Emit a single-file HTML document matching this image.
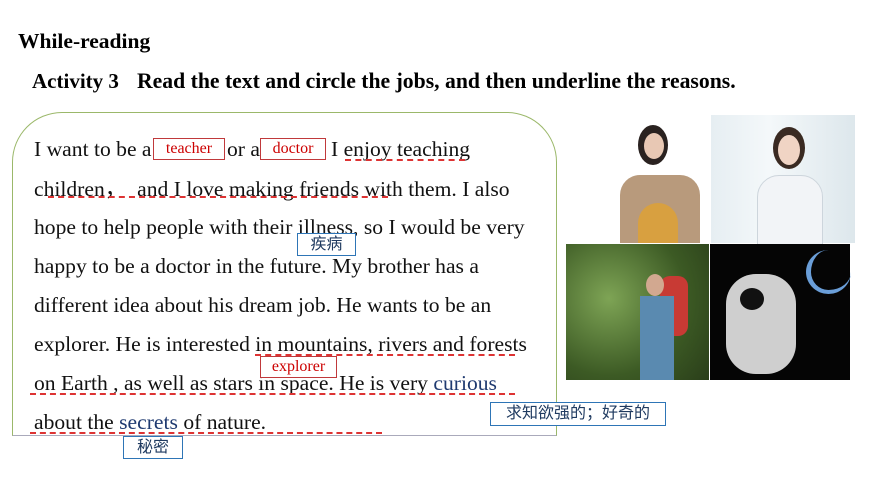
<!DOCTYPE html>
<html><head><meta charset="utf-8"><style>
body{margin:0;width:870px;height:489px;background:#fff;position:relative;overflow:hidden;font-family:"Liberation Serif",serif;}
.a{position:absolute;white-space:nowrap;}
.t{font-size:21.6px;color:#111;line-height:24px;left:34px;}
.u{position:absolute;border-bottom:2px dashed #d33;height:0;}
.rb{position:absolute;border:1px solid #c0393b;color:#c00;font-size:16px;text-align:center;line-height:20px;box-sizing:border-box;}
.bb{position:absolute;border:1px solid #2e75b6;color:#1f3a60;font-family:"Liberation Sans","Noto Sans CJK SC",sans-serif;font-size:16px;text-align:center;line-height:21px;box-sizing:border-box;background:#fff;}
</style></head><body>
<div class="a" style="left:18px;top:29px;font-size:21.5px;font-weight:bold;">While-reading</div>
<div class="a" style="left:32px;top:69px;font-size:21px;font-weight:bold;">Activity 3</div>
<div class="a" style="left:137px;top:69px;font-size:21.7px;font-weight:bold;">Read the text and circle the jobs, and then underline the reasons.</div>

<div class="a" style="left:12px;top:112px;width:545px;height:324px;border:1.3px solid #9bb86a;border-bottom-color:#aab;border-radius:50px 50px 0 0;box-sizing:border-box;"></div>

<div class="a t" style="top:137px;">I want to be a</div>
<div class="a t" style="top:137px;left:227px;">or a</div>
<div class="a t" style="top:137px;left:331px;">I enjoy teaching</div>
<div class="a t" style="top:176px;">children<span style="font-family:'Noto Sans CJK SC';">，</span>&nbsp; and I love making friends with them. I also</div>
<div class="a t" style="top:215px;">hope to help people with their illness, so I would be very</div>
<div class="a t" style="top:254px;">happy to be a doctor in the future. My brother has a</div>
<div class="a t" style="top:293px;">different idea about his dream job. He wants to be an</div>
<div class="a t" style="top:332px;">explorer. He is interested in mountains, rivers and forests</div>
<div class="a t" style="top:371px;">on Earth , as well as stars in space. He is very <span style="color:#1f3a70">curious</span></div>
<div class="a t" style="top:410px;">about the <span style="color:#1f3a70">secrets</span> of nature.</div>

<div class="u" style="left:345px;top:159px;width:120px;"></div>
<div class="u" style="left:48px;top:196px;width:340px;"></div>
<div class="u" style="left:255px;top:354px;width:260px;"></div>
<div class="u" style="left:30px;top:393px;width:485px;"></div>
<div class="u" style="left:30px;top:432px;width:352px;"></div>

<div class="rb" style="left:153px;top:138px;width:72px;height:22px;background:#fff;">teacher</div>
<div class="rb" style="left:260px;top:138px;width:66px;height:22px;background:#fff;">doctor</div>
<div class="rb" style="left:260px;top:356px;width:77px;height:22px;background:#fff;">explorer</div>
<div class="bb" style="left:297px;top:233px;width:59px;height:23px;">疾病</div>
<div class="bb" style="left:490px;top:402px;width:176px;height:24px;">求知欲强的；好奇的</div>
<div class="bb" style="left:123px;top:436px;width:60px;height:23px;">秘密</div>

<div class="a" style="left:598px;top:115px;width:112px;height:128px;background:#fff;">
  <div class="a" style="left:40px;top:10px;width:30px;height:40px;border-radius:50%;background:#2a2220;"></div>
  <div class="a" style="left:46px;top:18px;width:20px;height:26px;border-radius:50%;background:#e8c8b4;"></div>
  <div class="a" style="left:22px;top:60px;width:80px;height:68px;border-radius:20px 20px 0 0;background:#b89a7c;"></div>
  <div class="a" style="left:40px;top:88px;width:40px;height:40px;border-radius:50% 50% 0 0;background:#d8a040;"></div>
</div>
<div class="a" style="left:711px;top:115px;width:144px;height:128px;background:linear-gradient(90deg,#e6eef2,#f4f8fa 40%,#dde7ec);">
  <div class="a" style="left:62px;top:12px;width:32px;height:42px;border-radius:50%;background:#3a2a22;"></div>
  <div class="a" style="left:67px;top:20px;width:22px;height:30px;border-radius:50%;background:#f0d4c4;"></div>
  <div class="a" style="left:46px;top:60px;width:64px;height:68px;border-radius:22px 22px 0 0;background:#f2f4f7;border:1px solid #cdd5dc;"></div>
</div>
<div class="a" style="left:566px;top:244px;width:143px;height:136px;background:radial-gradient(circle at 30% 40%,#7ea455,#3c5a24 60%,#2a3e1a);">
  <div class="a" style="left:94px;top:32px;width:28px;height:60px;border-radius:10px;background:#c83a34;"></div>
  <div class="a" style="left:74px;top:52px;width:34px;height:84px;background:#5a8ab0;"></div>
  <div class="a" style="left:80px;top:30px;width:18px;height:22px;border-radius:50%;background:#d2a890;"></div>
</div>
<div class="a" style="left:710px;top:244px;width:140px;height:136px;background:#050505;">
  <div class="a" style="left:96px;top:6px;width:40px;height:40px;border-radius:50%;border-left:5px solid #6a9ed8;border-bottom:4px solid #6a9ed8;"></div>
  <div class="a" style="left:16px;top:30px;width:70px;height:100px;border-radius:30px;background:#cfcfcf;"></div>
  <div class="a" style="left:30px;top:44px;width:24px;height:22px;border-radius:50%;background:#111;"></div>
</div>
</body></html>
